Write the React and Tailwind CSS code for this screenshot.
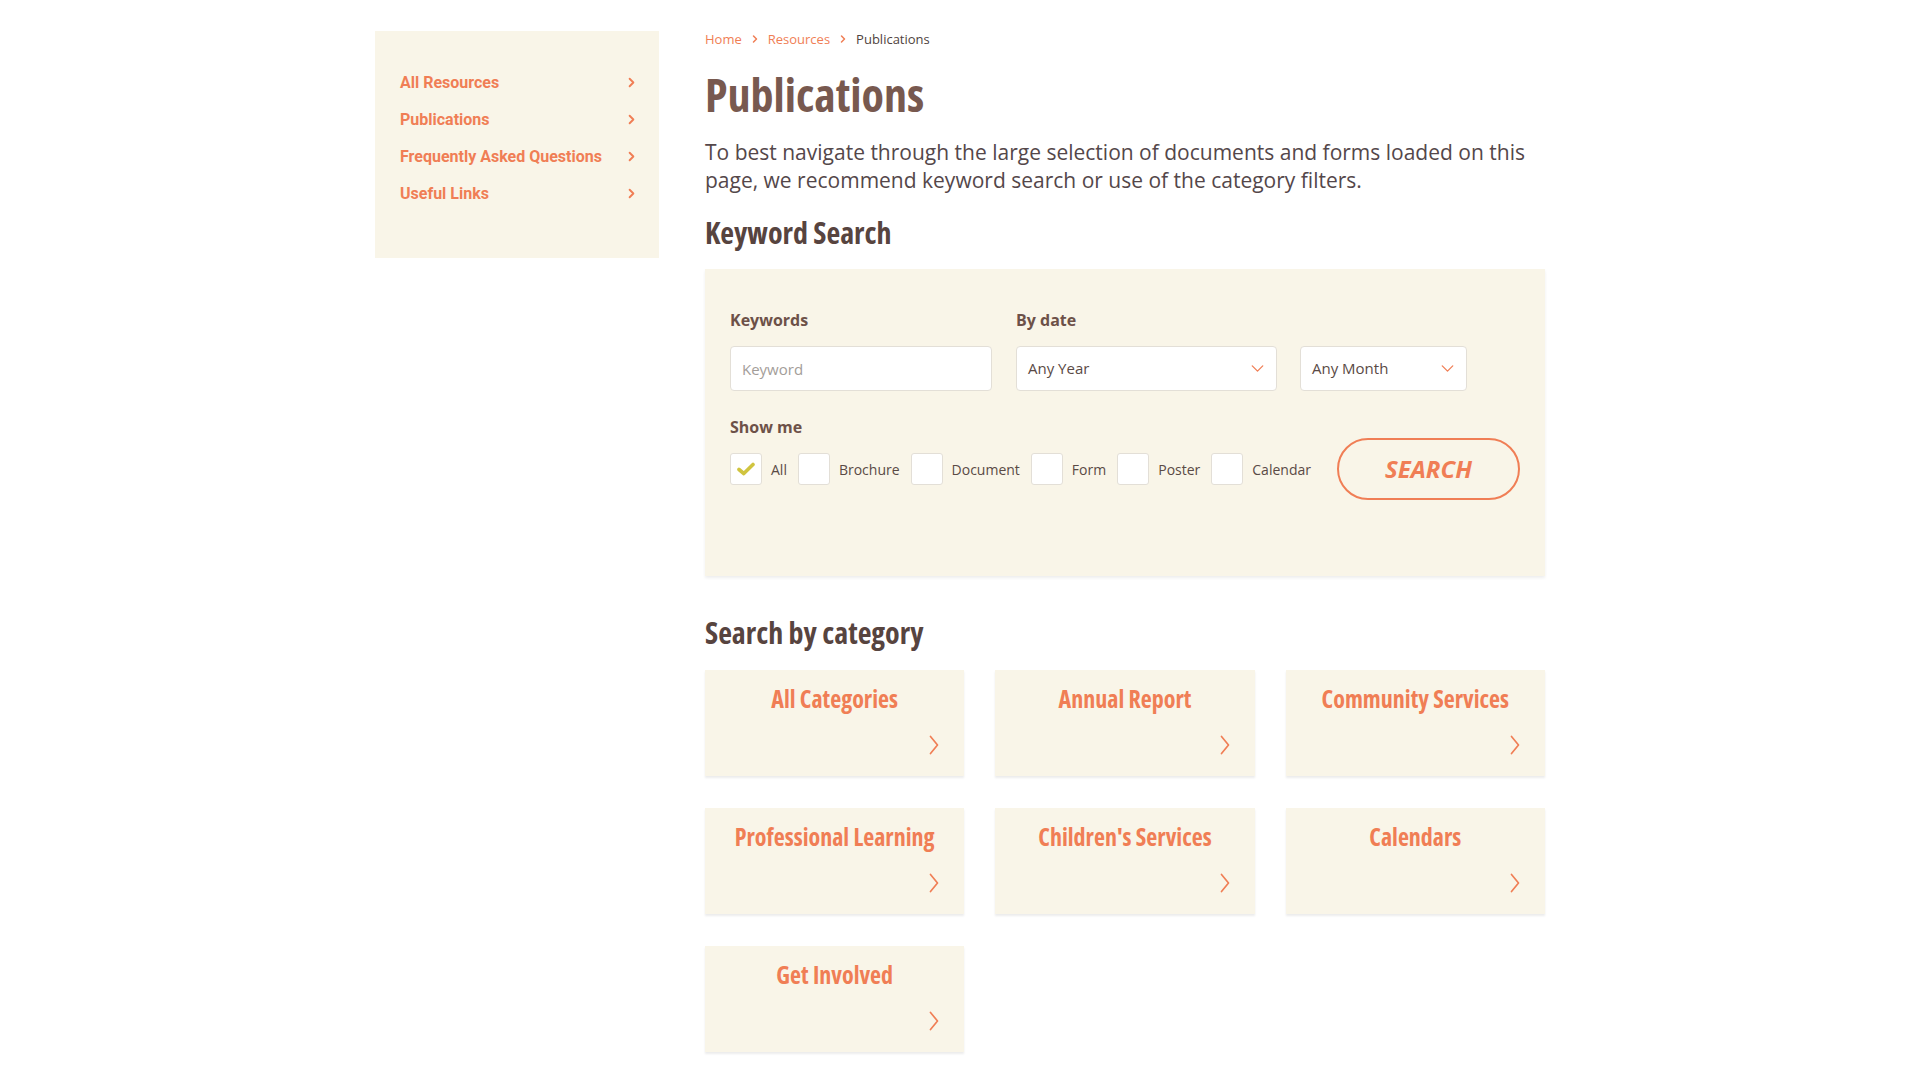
import { ChevronRight, ChevronDown } from "lucide-react";

const sideLinks = ["All Resources", "Publications", "Frequently Asked Questions", "Useful Links"];

const categories = [
  "All Categories",
  "Annual Report",
  "Community Services",
  "Professional Learning",
  "Children's Services",
  "Calendars",
  "Get Involved",
];

const types = ["All", "Brochure", "Document", "Form", "Poster", "Calendar"];

const Checkbox = ({ checked }) => (
  <span className="flex h-[32px] w-[32px] items-center justify-center rounded-[3px] border border-[#e3dfd7] bg-white">
    {checked && (
      <svg width="18" height="14" viewBox="0 0 18 14">
        <path d="M2 7.5 L6.8 11.5 L16 2.5" fill="none" stroke="#d0c43f" strokeWidth="3.6" strokeLinecap="round" strokeLinejoin="round" />
      </svg>
    )}
  </span>
);

const Select = ({ label, width }) => (
  <div className={`flex h-[45px] items-center justify-between rounded-[4px] border border-[#e3dfd7] bg-white pl-[11px] pr-[8px] ${width}`}>
    <span className="text-[15px] text-[#5a4a45]">{label}</span>
    <ChevronDown className="h-[21px] w-[21px] text-[#f07e55]" strokeWidth={1.5} />
  </div>
);

const App = () => {
  return (
    <div className="min-h-[1090px] bg-white font-['Open_Sans',sans-serif]">
      <div className="mx-auto flex w-[1170px] gap-[46px] pt-[31px]">

        {/* sidebar */}
        <aside className="h-[227px] w-[284px] shrink-0 bg-[#f9f5e8] pl-[25px] pr-[20px] pt-[33px]">
          <ul>
            {sideLinks.map((l) => (
              <li key={l} className="flex h-[37px] items-center justify-between font-['Roboto',sans-serif] text-[16px] font-bold text-[#f07e55]">
                <span>{l}</span>
                <ChevronRight className="h-[15px] w-[15px]" strokeWidth={3} />
              </li>
            ))}
          </ul>
        </aside>

        {/* main */}
        <main className="w-[840px]">
          <nav className="flex h-[16px] items-center text-[13px] leading-[16px]">
            <span className="text-[#f07e55]">Home</span>
            <ChevronRight className="mx-[7px] h-[12px] w-[12px] text-[#f07e55]" strokeWidth={3} />
            <span className="text-[#f07e55]">Resources</span>
            <ChevronRight className="mx-[7px] h-[12px] w-[12px] text-[#f07e55]" strokeWidth={3} />
            <span className="text-[#4f4340]">Publications</span>
          </nav>

          <h1 className="mt-[18px] text-[46px] font-bold leading-[58px] font-stretch-condensed text-[#78594f]">
            Publications
          </h1>

          <p className="mt-[15px] text-[21px] leading-[28px] text-[#54474a]">
            To best navigate through the large selection of documents and forms loaded on this page, we recommend keyword search or use of the category filters.
          </p>

          <h2 className="mt-[21px] text-[30px] font-bold leading-[36px] font-stretch-condensed text-[#57443f]">
            Keyword Search
          </h2>

          {/* search panel */}
          <section className="mt-[18px] h-[307px] bg-[#f9f5e8] px-[25px] pt-[40px] shadow-[0_2px_3px_rgba(0,0,0,0.07)]">
            <div className="flex gap-[24px]">
              <div>
                <div className="text-[16px] font-bold leading-[22px] text-[#6d5148]">Keywords</div>
                <input
                  placeholder="Keyword"
                  className="mt-[15px] h-[45px] w-[262px] rounded-[4px] border border-[#e3dfd7] bg-white px-[11px] text-[15px] text-[#5a4a45] placeholder:text-[#a39d99] focus:outline-none"
                />
              </div>
              <div>
                <div className="text-[16px] font-bold leading-[22px] text-[#6d5148]">By date</div>
                <div className="mt-[15px] flex gap-[23px]">
                  <Select label="Any Year" width="w-[261px]" />
                  <Select label="Any Month" width="w-[167px]" />
                </div>
              </div>
            </div>

            <div className="mt-[25px] text-[16px] font-bold leading-[22px] text-[#6d5148]">Show me</div>
            <div className="flex items-center justify-between">
              <div className="flex items-center gap-[11px]">
                {types.map((t, i) => (
                  <label key={t} className="flex items-center gap-[9px] text-[14px] text-[#5a4a45]">
                    <Checkbox checked={i === 0} />
                    <span>{t}</span>
                  </label>
                ))}
              </div>
              <button className="flex h-[62px] w-[183px] items-center justify-center rounded-full border-2 border-[#f07e55] text-[24px] font-bold italic text-[#f07e55]">
                SEARCH
              </button>
            </div>
          </section>

          <h2 className="mt-[39px] text-[30px] font-bold leading-[36px] font-stretch-condensed text-[#57443f]">
            Search by category
          </h2>

          <div className="mt-[19px] grid grid-cols-3 gap-x-[31px] gap-y-[32px]">
            {categories.map((c) => (
              <a key={c} href="#" className="flex h-[106px] flex-col bg-[#f9f5e8] px-[20px] pt-[13px] shadow-[0_2px_2px_rgba(0,0,0,0.08)]">
                <span className="text-center text-[24px] font-bold leading-[32px] font-stretch-condensed text-[#f07e55]">{c}</span>
                <span className="mt-[20px] flex justify-end pr-[5px]">
                  <svg width="10" height="20" viewBox="0 0 10 20">
                    <path d="M1.5 1.5 L8.5 10 L1.5 18.5" fill="none" stroke="#f07e55" strokeWidth="1.7" strokeLinecap="round" strokeLinejoin="round" />
                  </svg>
                </span>
              </a>
            ))}
          </div>
        </main>
      </div>
    </div>
  );
};

export default App;
